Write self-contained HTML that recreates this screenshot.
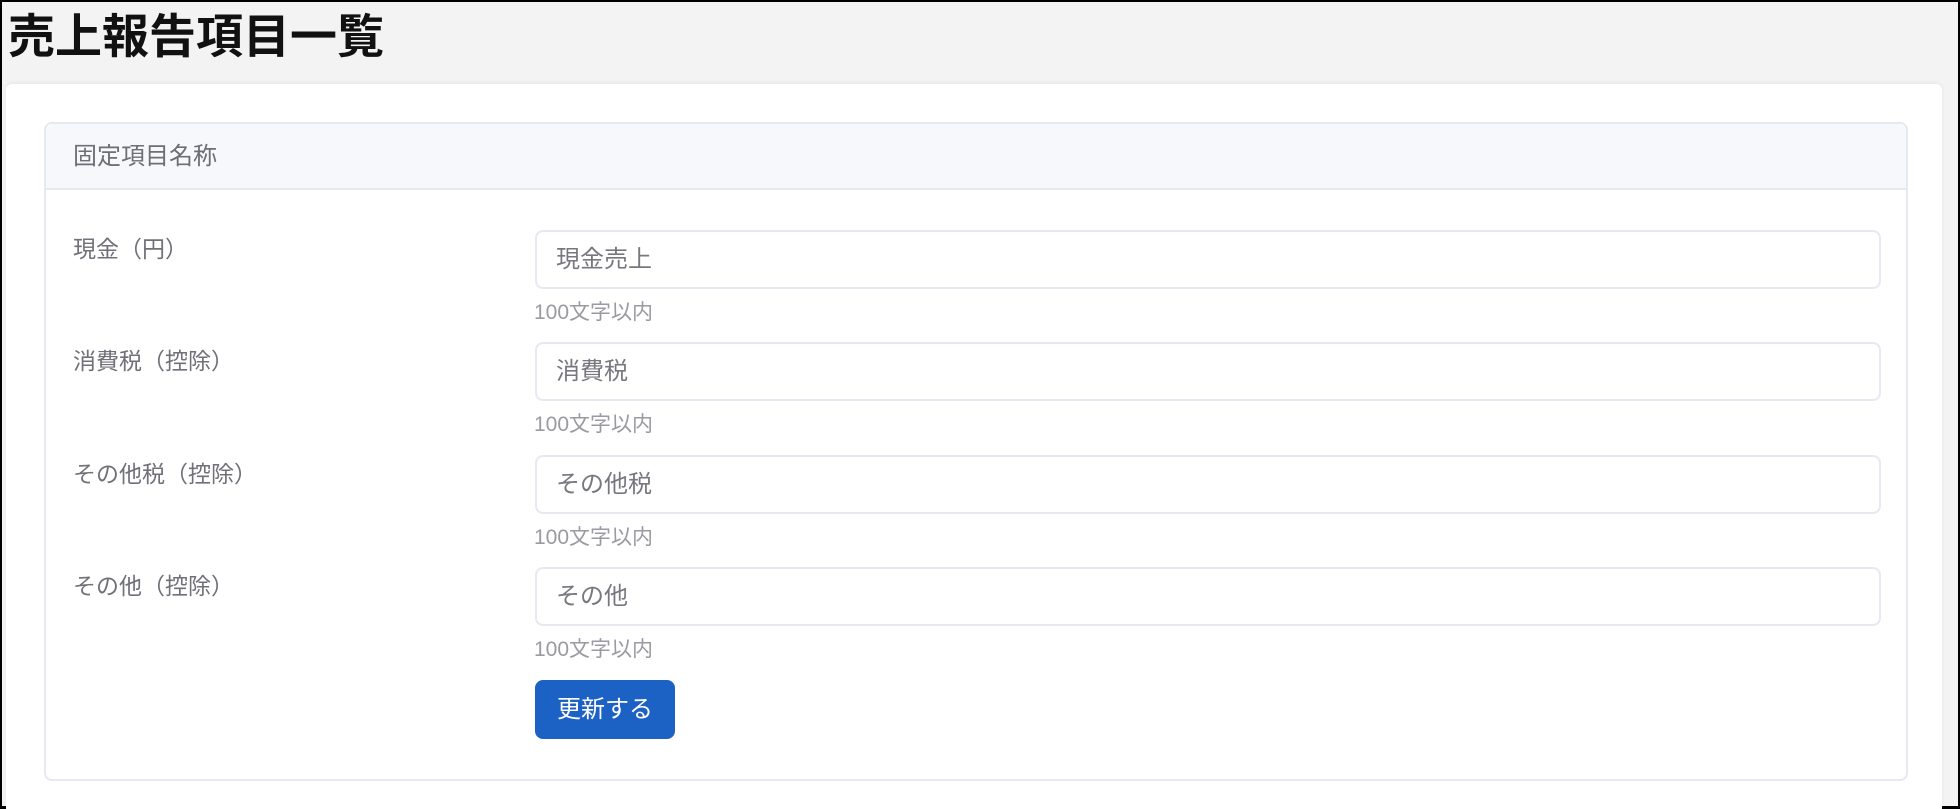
<!DOCTYPE html>
<html><head><meta charset="utf-8"><style>
*{box-sizing:border-box;margin:0;padding:0}
html,body{width:1960px;height:809px;overflow:hidden}
body{background:#000;font-family:"Liberation Sans","Noto Sans CJK JP",sans-serif;position:relative}
.frame{position:absolute;left:2px;top:2px;width:1956px;height:804px;background:#f3f3f3}
h1{position:absolute;left:8px;top:8px;font-size:47px;font-weight:bold;color:#111;line-height:58px;letter-spacing:0}
.card{position:absolute;left:6px;top:84px;width:1936px;height:730px;background:#fff;border-radius:6px;box-shadow:0 -1px 4px rgba(0,0,0,.06)}
.panel{position:absolute;left:44px;top:122px;width:1864px;height:659px;border:2px solid #e6e8f2;border-radius:8px;background:#fff}
.ph{position:absolute;left:0;top:0;width:100%;height:66px;background:#f7f8fb;border-bottom:2px solid #e6e8f2;border-radius:8px 8px 0 0}
.ph span{position:absolute;left:27px;top:18px;font-size:24px;color:#6e6e76;line-height:30px}
.lbl{position:absolute;left:73px;font-size:23px;color:#707078;line-height:30px}
.inp{position:absolute;left:535px;width:1346px;height:59px;border:2px solid #e6e8f2;border-radius:8px;background:#fff}
.inp span{position:absolute;left:19px;top:12px;font-size:24px;color:#77777f;line-height:32px}
.help{position:absolute;left:534px;font-size:21px;color:#9a9aa2;line-height:26px}
.btn{position:absolute;left:535px;top:680px;width:140px;height:59px;background:#1b62c4;border-radius:8px;color:#fff;font-size:24px;line-height:59px;text-align:center}
</style></head><body>
<div class="frame"></div>
<h1>売上報告項目一覧</h1>
<div class="card"></div>
<div class="panel"><div class="ph"><span>固定項目名称</span></div></div>

<div class="lbl" style="top:234px">現金（円）</div>
<div class="inp" style="top:230px"><span>現金売上</span></div>
<div class="help" style="top:300px">100文字以内</div>

<div class="lbl" style="top:346px">消費税（控除）</div>
<div class="inp" style="top:342px"><span>消費税</span></div>
<div class="help" style="top:412px">100文字以内</div>

<div class="lbl" style="top:459px">その他税（控除）</div>
<div class="inp" style="top:455px"><span>その他税</span></div>
<div class="help" style="top:525px">100文字以内</div>

<div class="lbl" style="top:571px">その他（控除）</div>
<div class="inp" style="top:567px"><span>その他</span></div>
<div class="help" style="top:637px">100文字以内</div>

<div class="btn">更新する</div>
</body></html>
